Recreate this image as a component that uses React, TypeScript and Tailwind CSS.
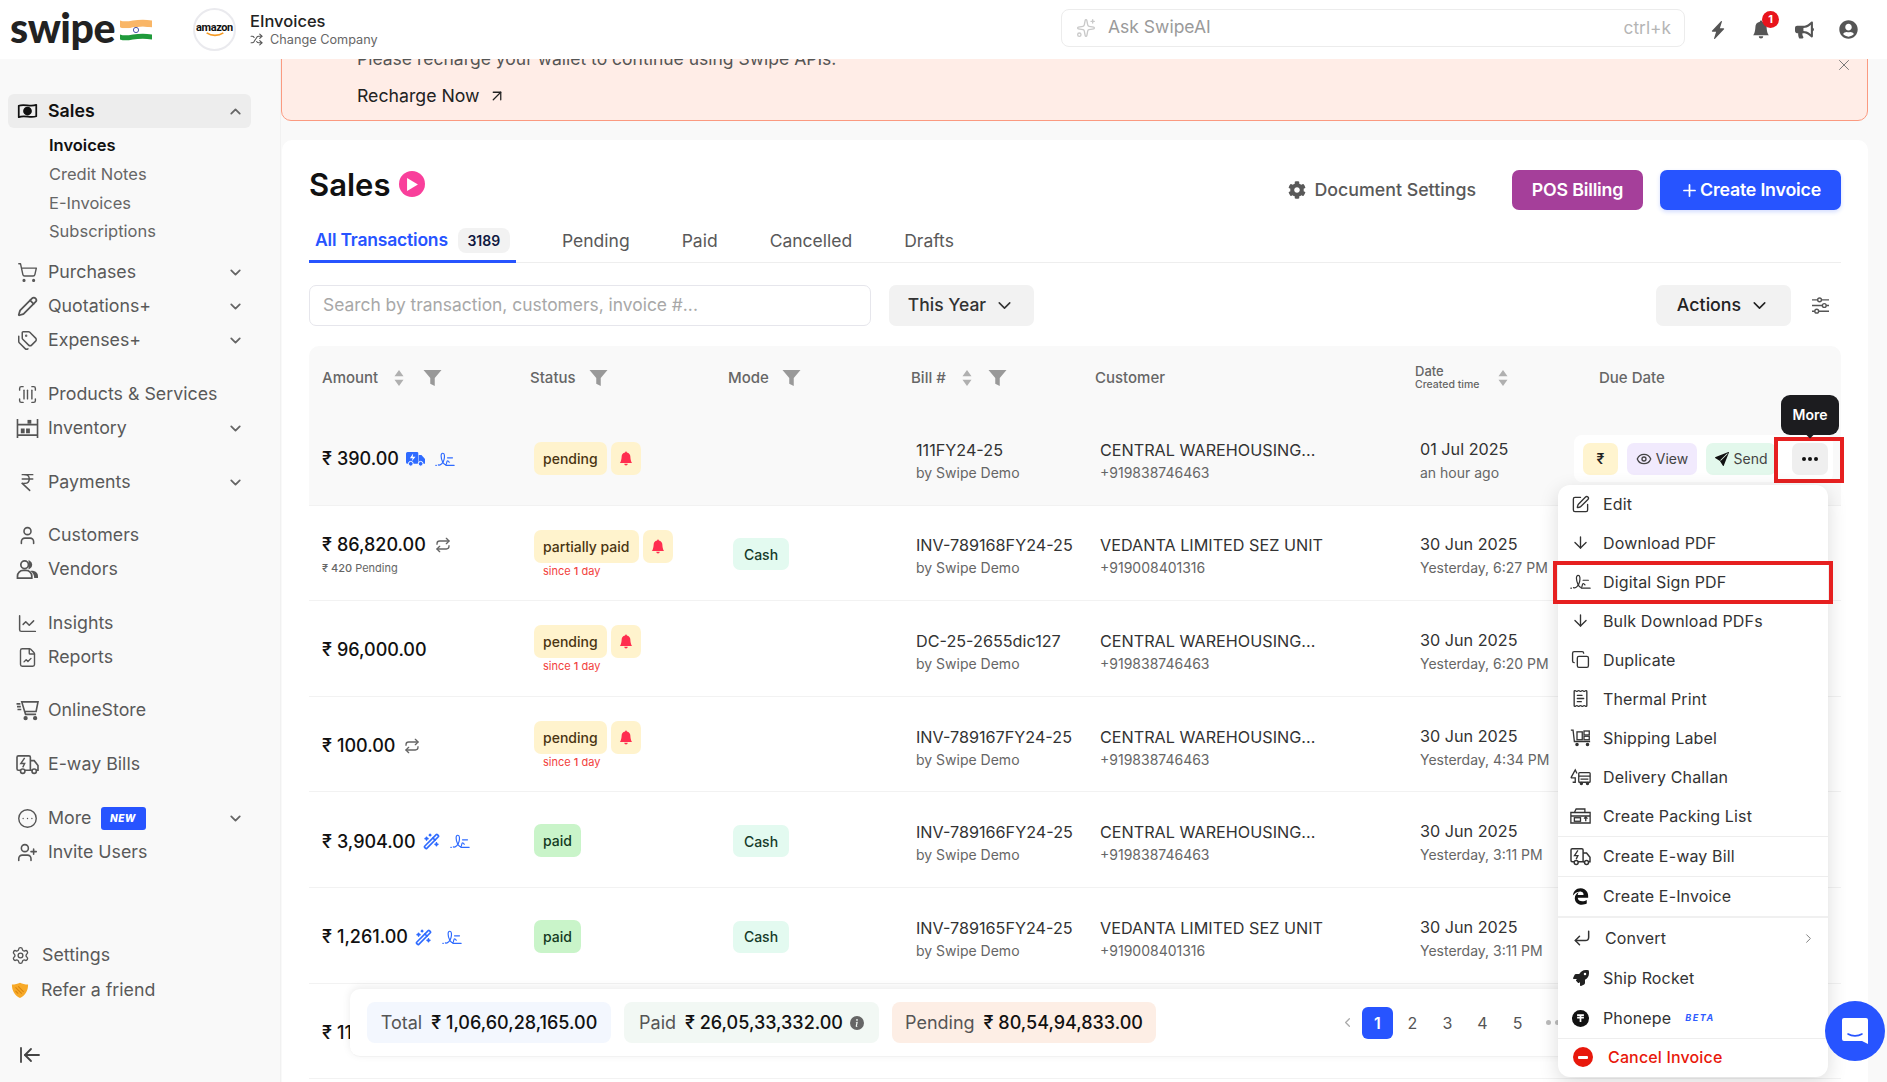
import {
  ArrowDown,
  ArrowLeftToLine,
  ArrowUpRight,
  ChartLine,
  ChevronDown,
  ChevronLeft,
  ChevronRight,
  ChevronUp,
  CircleEllipsis,
  Copy,
  CornerDownLeft,
  Eye,
  FileChartLine,
  IndianRupee,
  Pencil,
  Plus,
  ReceiptText,
  Repeat,
  ScanBarcode,
  Settings,
  Shuffle,
  Sparkles,
  SquarePen,
  Tags,
  User,
  UserPlus,
  WandSparkles,
  X,
  ShoppingCart,
} from "lucide-react";
import { BsLightningChargeFill, BsBellFill, BsInfoCircleFill, BsSendFill } from "react-icons/bs";
import { FaCog, FaUserCircle, FaRocket, FaEdgeLegacy, FaBullhorn } from "react-icons/fa";

const MoneyIcon = () => (
  <svg viewBox="0 0 24 20" className="w-[21px] h-[18px]" fill="none" stroke="#111" strokeWidth="2">
    <path d="M2 4c6-2.500 13 1.500 20-1v13c-6 2.500-13-1.500-20 1z" strokeLinejoin="round" />
    <circle cx="12" cy="10" r="4" fill="#111" />
  </svg>
);

const InventoryIcon = () => (
  <svg viewBox="0 0 24 22" className="w-[23px] h-[21px]" fill="none" stroke="#555" strokeWidth="1.7">
    <path d="M1.500 1v20M22.500 1v20M1.500 7h21M1.500 18h21" />
    <rect x="12" y="2" width="4" height="4" fill="#555" stroke="none" />
    <rect x="5" y="11" width="4" height="5" fill="#555" stroke="none" />
    <rect x="10.500" y="11" width="4" height="5" fill="#555" stroke="none" />
  </svg>
);

const VendorsIcon = () => (
  <svg viewBox="0 0 24 22" className="w-[23px] h-[21px]" fill="none" stroke="#555" strokeWidth="1.800">
    <circle cx="9" cy="6" r="4" />
    <path d="M1.500 20v-2a6 6 0 0 1 6-6h3a6 6 0 0 1 6 6v2z" />
    <path d="M14 2.500a4 4 0 0 1 0 7z" fill="#555" />
    <path d="M15 12.500c4-.5 8 1.500 8 5.500v2h-4c0-3-1-5.500-4-7.500z" fill="#555" stroke="none" />
  </svg>
);

const StoreCartIcon = () => (
  <svg viewBox="0 0 24 22" className="w-[23px] h-[21px]" fill="none" stroke="#555" strokeWidth="1.7">
    <path d="M6 2h17l-2 10H9L6 2zM9 12l1 3h11" />
    <path d="M0.500 4h4M1 7h4M1.500 10h4" />
    <circle cx="10" cy="19" r="1.400" fill="#555" />
    <circle cx="20" cy="19" r="1.400" fill="#555" />
  </svg>
);

const TruckBoltIcon = ({ className = "w-[23px] h-[21px]", color = "#555" }: { className?: string; color?: string }) => (
  <svg viewBox="0 0 24 22" className={className} fill="none" stroke={color} strokeWidth="1.7">
    <path d="M5 17H2.500A1.500 1.500 0 0 1 1 15.500V3.500A1.500 1.500 0 0 1 2.500 2H13.500A1.500 1.500 0 0 1 15 3.500V17H9" />
    <path d="M15 7h4l4 5v5h-2M15 17h2" />
    <circle cx="7" cy="18" r="2.300" />
    <circle cx="19" cy="18" r="2.300" />
    <path d="M9 4 5 10h4l-2 4" strokeWidth="1.500" />
  </svg>
);

const TruckSolid = () => (
  <svg viewBox="0 0 24 20" className="w-[19px] h-[16px]">
    <path d="M2 1h12a1.500 1.500 0 0 1 1.500 1.500V16H2a2 2 0 0 1-2-2V3a2 2 0 0 1 2-2z" fill="#2f6bff" />
    <path d="M16 5h3.500L24 10v6h-8z" fill="#2f6bff" />
    <circle cx="6" cy="16" r="3" fill="#2f6bff" stroke="#fff" strokeWidth="1.200" />
    <circle cx="18.500" cy="16" r="3" fill="#2f6bff" stroke="#fff" strokeWidth="1.200" />
    <path d="M9 3 5 9h3.500L7 13l5-6H8.500z" fill="#fff" />
  </svg>
);

// dot, looped scribble and the two lines on the right
const SignIcon = ({ className = "w-[20px] h-[17px]", color = "#2f6bff" }: { className?: string; color?: string }) => (
  <svg viewBox="0 0 24 20" className={className} fill="none" stroke={color} strokeWidth="1.400" strokeLinecap="round">
    <path d="M1 17h.6" />
    <path d="M4 16.500c3 1 6-2.500 7-7 .7-3.500.6-7-1.700-7-2.800 0-2.300 5.500-.3 10 1.400 3 3.500 4.500 4.500 3 .8-1.300.3-3.800 1.700-3.800 1 0 1 1.500 2 1.500" />
    <path d="M15 8h6M13 17h10" />
  </svg>
);

const ShippingIcon = () => (
  <svg viewBox="0 0 24 20" className="w-[21px] h-[18px]" fill="none" stroke="#333" strokeWidth="1.500">
    <path d="M1 1h2.500l1.500 13h18" />
    <rect x="8" y="3" width="6" height="9" />
    <rect x="16" y="2" width="6" height="4.500" />
    <rect x="16" y="8" width="6" height="4" />
    <circle cx="8" cy="17.500" r="1.300" fill="#333" />
    <circle cx="20" cy="17.500" r="1.300" fill="#333" />
  </svg>
);

const ChallanIcon = () => (
  <svg viewBox="0 0 24 20" className="w-[21px] h-[18px]" fill="none" stroke="#333" strokeWidth="1.500">
    <path d="M1 11l5-9 2 4M1 11h5v5H3" />
    <rect x="10" y="5" width="13" height="11" rx="1" />
    <path d="M10 9h13M12 12.500h9" />
    <circle cx="13" cy="17.500" r="1.200" fill="#333" />
    <circle cx="20" cy="17.500" r="1.200" fill="#333" />
  </svg>
);

const PackingIcon = () => (
  <svg viewBox="0 0 24 20" className="w-[21px] h-[18px]" fill="none" stroke="#333" strokeWidth="1.500">
    <path d="M1 6h22v12H1zM1 10h22M5 6l2-4h10v4" />
    <rect x="5" y="12" width="7" height="4" />
    <path d="M18 16v-5M16 13l2-2 2 2" />
  </svg>
);

const PhonepeIcon = () => (
  <svg viewBox="0 0 20 20" className="w-[17px] h-[17px]">
    <circle cx="10" cy="10" r="10" fill="#111" />
    <path d="M6 6h8M6 9h8M10 5v9" stroke="#fff" strokeWidth="2" fill="none" />
  </svg>
);

const FilterIcon = () => (
  <svg viewBox="0 0 20 20" className="w-[19px] h-[18px]" fill="#999">
    <path d="M0 1h20l-7.500 9v9l-5-2.500V10z" />
  </svg>
);

const SortIcon = () => (
  <svg viewBox="0 0 12 20" className="w-[12px] h-[18px]" fill="#b0b0b0">
    <path d="M6 1l5 7H1zM6 19l-5-7h10z" />
  </svg>
);

const NavItem = ({
  icon,
  label,
  caret,
  className = "",
  badge,
}: {
  icon: React.ReactNode;
  label: string;
  caret?: boolean;
  className?: string;
  badge?: boolean;
}) => (
  <div className={`flex items-center h-[34px] ml-[8px] w-[243px] ${className}`}>
    <span className="w-[40px] flex justify-center pl-[2px] shrink-0 pr-[4px]">{icon}</span>
    <span className="text-[#595959] text-[17.800px]">{label}</span>
    {badge && (
      <span className="ml-[9px] bg-[#2754ff] text-white rounded-[3px] text-[10px] font-extrabold italic w-[45px] h-[23px] flex items-center justify-center tracking-wider">
        NEW
      </span>
    )}
    {caret && <ChevronDown className="ml-auto mr-[7px] w-[17px] h-[17px] text-[#666]" strokeWidth={2.5} />}
  </div>
);

const Sidebar = () => {
  const ic = "w-[21px] h-[21px] text-[#555]";
  return (
    <aside className="w-[281px] shrink-0 flex flex-col border-r border-[#f1f1f1] pt-[35px] pb-[10px]">
      <div className="flex items-center h-[34px] ml-[8px] w-[243px] bg-[#ededed] rounded-[6px]">
        <span className="w-[40px] flex justify-center pr-[2px]">
          <MoneyIcon />
        </span>
        <span className="text-[#111] text-[17.800px] font-semibold">Sales</span>
        <ChevronUp className="ml-auto mr-[7px] w-[17px] h-[17px] text-[#666]" strokeWidth={2.5} />
      </div>
      <div className="mt-[3px] pl-[49px] text-[16.500px] text-[#666]">
        <div className="h-[29px] flex items-center text-[#111] font-semibold">Invoices</div>
        <div className="h-[29px] flex items-center">Credit Notes</div>
        <div className="h-[28px] flex items-center">E-Invoices</div>
        <div className="h-[28px] flex items-center">Subscriptions</div>
      </div>
      <NavItem className="mt-[10px]" caret label="Purchases" icon={<ShoppingCart className={ic} strokeWidth={1.6} />} />
      <NavItem caret label="Quotations+" icon={<Pencil className={ic} strokeWidth={2} />} />
      <NavItem caret label="Expenses+" icon={<Tags className={ic} strokeWidth={1.7} />} />
      <NavItem className="mt-[20px]" label="Products & Services" icon={<ScanBarcode className={ic} strokeWidth={1.6} />} />
      <NavItem caret label="Inventory" icon={<InventoryIcon />} />
      <NavItem className="mt-[20px]" caret label="Payments" icon={<IndianRupee className={ic} strokeWidth={1.7} />} />
      <NavItem className="mt-[19px]" label="Customers" icon={<User className={ic} strokeWidth={1.8} />} />
      <NavItem label="Vendors" icon={<VendorsIcon />} />
      <NavItem className="mt-[20px]" label="Insights" icon={<ChartLine className={ic} strokeWidth={1.7} />} />
      <NavItem label="Reports" icon={<FileChartLine className={ic} strokeWidth={1.6} />} />
      <NavItem className="mt-[19px]" label="OnlineStore" icon={<StoreCartIcon />} />
      <NavItem className="mt-[20px]" label="E-way Bills" icon={<TruckBoltIcon />} />
      <NavItem className="mt-[20px]" caret badge label="More" icon={<CircleEllipsis className={ic} strokeWidth={1.6} />} />
      <NavItem label="Invite Users" icon={<UserPlus className={ic} strokeWidth={1.8} />} />
      <div className="mt-auto pl-[11px]">
        <div className="flex items-center h-[34px] gap-[12px] text-[#595959] text-[17.800px]">
          <Settings className="w-[19px] h-[19px] text-[#555]" strokeWidth={1.7} />
          Settings
        </div>
        <div className="flex items-center h-[34px] gap-[12px] text-[#595959] text-[17.800px] mt-[1px]">
          <svg viewBox="0 0 20 20" className="w-[18px] h-[18px]">
            <path d="M1 4c4 0 6-1 9-2 3 1 5 2 9 2 0 7-3 12-9 15C4 16 1 11 1 4z" fill="#f7a928" />
            <path d="M5 7l7 7M8 6l6 6M5 11l3 3" stroke="#d9850f" strokeWidth="1.200" />
          </svg>
          Refer a friend
        </div>
        <div className="mt-[31px] pl-[7px] h-[34px] flex items-center">
          <ArrowLeftToLine className="w-[24px] h-[24px] text-[#444]" strokeWidth={1.8} />
        </div>
      </div>
    </aside>
  );
};

const Header = () => (
  <header className="relative z-20 h-[59px] shrink-0 bg-white flex items-center pl-[10px] pr-[29px]">
    <span className="[font-family:Lato,sans-serif] font-black text-[41px] leading-none text-[#222] tracking-[-0.5px] -mt-[4px] w-[105px]">
      swipe
    </span>
    <svg viewBox="0 0 32 24" className="w-[32px] h-[25px] ml-[5px]">
      <path d="M0 3c8 3 16-3 32 0v7c-16-3-24 3-32 0z" fill="#f9b667" />
      <path d="M0 10c8 3 16-3 32 0v7c-16-3-24 3-32 0z" fill="#fff" />
      <path d="M0 17c8 3 16-3 32 0v5c-16-3-24 3-32 0z" fill="#1f9a3b" />
      <circle cx="16" cy="12.500" r="2.600" fill="none" stroke="#4a55a8" strokeWidth="1" />
    </svg>
    <div className="ml-[41px] w-[43px] h-[43px] rounded-full border-2 border-[#eaeaee] flex flex-col items-center justify-center">
      <span className="[font-family:Roboto,sans-serif] font-bold text-[11px] leading-none text-[#111] tracking-[-0.4px]">amazon</span>
      <svg viewBox="0 0 24 6" className="w-[20px] h-[5px] -mt-[1px]">
        <path d="M2 1c6 4 14 4 20 0" fill="none" stroke="#f59a23" strokeWidth="2" />
      </svg>
    </div>
    <div className="ml-[14px]">
      <div className="text-[16.500px] leading-[20px] text-[#222] font-medium">EInvoices</div>
      <div className="flex items-center text-[12.700px] leading-[17px] text-[#666]">
        <Shuffle className="w-[13px] h-[13px] mr-[7px] text-[#555]" />
        Change Company
      </div>
    </div>
    <div className="ml-auto w-[624px] h-[38px] -mt-[4px] rounded-[8px] border border-[#ececec] flex items-center pl-[14px] pr-[13px] mr-[24px]">
      <Sparkles className="w-[20px] h-[20px] text-[#c9c9c9]" strokeWidth={1.6} />
      <span className="ml-[12px] text-[17.500px] text-[#9a9a9a]">Ask SwipeAI</span>
      <span className="ml-auto text-[17.300px] text-[#b5b5b5]">ctrl+k</span>
    </div>
    <div className="flex items-center gap-[25px] text-[#555]">
      <BsLightningChargeFill className="w-[18px] h-[20px]" />
      <span className="relative">
        <BsBellFill className="w-[18px] h-[19px]" />
        <span className="absolute -top-[9px] left-[10px] w-[17px] h-[17px] rounded-full bg-[#e8141c] text-white text-[11px] font-bold flex items-center justify-center">
          1
        </span>
      </span>
      <FaBullhorn className="w-[19px] h-[18px]" />
      <FaUserCircle className="w-[19px] h-[19px]" />
    </div>
  </header>
);

const Rupee = () => <span className="mr-[5px]">₹</span>;

type Row = {
  amount: string;
  sub?: string;
  icons?: "eway" | "repeat" | "wand";
  status: string;
  bell?: boolean;
  since?: boolean;
  cash?: boolean;
  bill: string;
  customer: string;
  phone: string;
  date: string;
  created: string;
};

const CENTRAL = { customer: "CENTRAL WAREHOUSING...", phone: "+919838746463" };
const VEDANTA = { customer: "VEDANTA LIMITED SEZ UNIT", phone: "+919008401316" };

const rows: Row[] = [
  { amount: "390.00", icons: "eway", status: "pending", bell: true, bill: "111FY24-25", ...CENTRAL, date: "01 Jul 2025", created: "an hour ago" },
  { amount: "86,820.00", sub: "420", icons: "repeat", status: "partially paid", bell: true, since: true, cash: true, bill: "INV-789168FY24-25", ...VEDANTA, date: "30 Jun 2025", created: "Yesterday, 6:27 PM" },
  { amount: "96,000.00", status: "pending", bell: true, since: true, bill: "DC-25-2655dic127", ...CENTRAL, date: "30 Jun 2025", created: "Yesterday, 6:20 PM" },
  { amount: "100.00", icons: "repeat", status: "pending", bell: true, since: true, bill: "INV-789167FY24-25", ...CENTRAL, date: "30 Jun 2025", created: "Yesterday, 4:34 PM" },
  { amount: "3,904.00", icons: "wand", status: "paid", cash: true, bill: "INV-789166FY24-25", ...CENTRAL, date: "30 Jun 2025", created: "Yesterday, 3:11 PM" },
  { amount: "1,261.00", icons: "wand", status: "paid", cash: true, bill: "INV-789165FY24-25", ...VEDANTA, date: "30 Jun 2025", created: "Yesterday, 3:11 PM" },
];

const GRID = "grid grid-cols-[217px_198px_183px_184px_320px_184px_245px]";

const TableRow = ({ row, hover }: { row: Row; hover?: boolean }) => {
  const paid = row.status === "paid";
  return (
    <div className={`relative ${GRID} items-center h-[95.600px] border-b border-[#f2f2f2] ${hover ? "bg-[#f9f9f9]" : ""}`}>
      <div className="pl-[13px] pt-[4px]">
        <div className="flex items-center text-[18px] leading-[24px] font-medium text-[#111]">
          <Rupee />
          {row.amount}
          {row.icons === "eway" && (
            <span className="flex items-center gap-[10px] ml-[7px]">
              <TruckSolid />
              <SignIcon />
            </span>
          )}
          {row.icons === "repeat" && <Repeat className="w-[16px] h-[16px] ml-[9px] text-[#666]" strokeWidth={2} />}
          {row.icons === "wand" && (
            <span className="flex items-center gap-[10px] ml-[7px]">
              <WandSparkles className="w-[17px] h-[17px] text-[#2f6bff]" strokeWidth={2.3} />
              <SignIcon />
            </span>
          )}
        </div>
        {row.sub && (
          <div className="text-[11px] leading-[16px] mt-[3px] text-[#666]">
            <span className="font-medium">₹ {row.sub}</span> Pending
          </div>
        )}
      </div>
      <div className="pl-[8px] pt-[2px]">
        <div className="flex gap-[4px]">
          <span className={`h-[33px] px-[9px] rounded-[7px] flex items-center text-[14px] font-medium ${paid ? "bg-[#c9f4c9] text-[#143a1f]" : "bg-[#fff3cd] text-[#4a3512]"}`}>
            {row.status}
          </span>
          {row.bell && (
            <span className="h-[33px] w-[30px] rounded-[7px] bg-[#fff3cd] flex items-center justify-center text-[#ff2d4f]">
              <BsBellFill className="w-[14px] h-[15px]" />
            </span>
          )}
        </div>
        {row.since && <div className="pl-[9px] text-[11px] leading-[14px] mt-[1px] text-[#f2413d]">since <b className="font-medium">1</b> day</div>}
      </div>
      <div className="pl-[9px] pt-[3px]">
        {row.cash && <span className="inline-flex h-[32px] w-[56px] rounded-[7px] bg-[#e3faf0] items-center justify-center text-[14px] font-medium text-[#163a2a]">Cash</span>}
      </div>
      <div className="pl-[9px] pt-[6px]">
        <div className="text-[16.200px] leading-[24px] text-[#333]">{row.bill}</div>
        <div className="text-[14px] leading-[21px] text-[#666]">by Swipe Demo</div>
      </div>
      <div className="pl-[9px] pt-[6px]">
        <div className="text-[16.200px] leading-[24px] text-[#333]">{row.customer}</div>
        <div className="text-[14px] leading-[21px] text-[#666]">{row.phone}</div>
      </div>
      <div className="pl-[9px] pt-[6px] whitespace-nowrap">
        <div className="text-[16.200px] leading-[24px] text-[#333]">{row.date}</div>
        <div className="text-[14px] leading-[23px] text-[#666]">{row.created}</div>
      </div>
      <div />
      {hover && (
        <div className="absolute right-[8px] top-[25px] h-[47px] w-[259px] rounded-[8px] bg-white flex items-center pl-[9px] text-[14px] text-[#444]">
          <span className="w-[35px] h-[32px] rounded-[7px] bg-[#fff4cf] flex items-center justify-center text-[#222] font-semibold">₹</span>
          <span className="ml-[9px] w-[70px] h-[32px] rounded-[7px] bg-[#f1eafd] flex items-center justify-center gap-[4px]">
            <Eye className="w-[16px] h-[16px]" />
            View
          </span>
          <span className="ml-[9px] w-[70px] h-[32px] rounded-[7px] bg-[#e3f8ec] flex items-center justify-center gap-[5px]">
            <BsSendFill className="w-[14px] h-[14px] text-[#111]" />
            Send
          </span>
          <span className="relative ml-[16px] w-[36px] h-[32px] rounded-[7px] bg-[#efefef] flex items-center justify-center text-[#111] font-bold gap-[2px]">
            <i className="w-[4px] h-[4px] rounded-full bg-[#111]" />
            <i className="w-[4px] h-[4px] rounded-full bg-[#111]" />
            <i className="w-[4px] h-[4px] rounded-full bg-[#111]" />
            <span className="absolute -left-[18px] -top-[6px] w-[70px] h-[46px] border-[4px] border-[#e62020]" />
            <span className="absolute -left-[11px] -top-[48px] w-[58px] h-[40px] rounded-[9px] bg-[#1c1c1f] text-white text-[14px] font-semibold flex items-center justify-center">
              More
            </span>
            <span className="absolute left-[13px] -top-[9px] w-[10px] h-[5px] bg-[#1c1c1f] [clip-path:polygon(0_0,100%_0,50%_100%)]" />
          </span>
        </div>
      )}
    </div>
  );
};

const MenuItem = ({ icon, label, className = "", boxed }: { icon: React.ReactNode; label: string; className?: string; boxed?: boolean }) => (
  <div className={`relative h-[39.100px] flex items-center text-[16px] text-[#333] tracking-[0.15px] ${className}`}>
    <span className="w-[45px] flex justify-center shrink-0">{icon}</span>
    {label}
    {boxed && <span className="absolute -left-[5px] -right-[5px] top-[-1px] bottom-[-3px] border-[4px] border-[#e62020]" />}
  </div>
);

const ActionMenu = () => {
  const ic = "w-[19px] h-[19px] text-[#333]";
  return (
    <div className="absolute z-10 left-[1249px] top-[139px] w-[270px] h-[592px] bg-white rounded-[12px] shadow-[0_6px_20px_rgba(0,0,0,0.14)]">
      <MenuItem className="!h-[38px]" label="Edit" icon={<SquarePen className={ic} strokeWidth={1.7} />} />
      <MenuItem label="Download PDF" icon={<ArrowDown className={ic} strokeWidth={1.7} />} />
      <MenuItem boxed label="Digital Sign PDF" icon={<SignIcon className="w-[21px] h-[18px]" color="#333" />} />
      <MenuItem label="Bulk Download PDFs" icon={<ArrowDown className={ic} strokeWidth={1.7} />} />
      <MenuItem label="Duplicate" icon={<Copy className={ic} strokeWidth={1.7} />} />
      <MenuItem label="Thermal Print" icon={<ReceiptText className={ic} strokeWidth={1.7} />} />
      <MenuItem label="Shipping Label" icon={<ShippingIcon />} />
      <MenuItem label="Delivery Challan" icon={<ChallanIcon />} />
      <MenuItem label="Create Packing List" icon={<PackingIcon />} />
      <div className="border-t border-[#eee]" />
      <MenuItem label="Create E-way Bill" icon={<TruckBoltIcon className="w-[21px] h-[19px]" color="#333" />} />
      <div className="border-t border-[#eee]" />
      <MenuItem label="Create E-Invoice" icon={<FaEdgeLegacy className="w-[17px] h-[17px] text-[#111]" />} />
      <div className="border-t-2 border-[#f0f0f0]" />
      <div className="h-[41px] flex items-center text-[16px] text-[#333] tracking-[0.15px]">
        <span className="w-[47px] flex justify-center shrink-0">
          <CornerDownLeft className="w-[20px] h-[20px] text-[#333]" strokeWidth={1.8} />
        </span>
        Convert
        <ChevronRight className="ml-auto mr-[12px] w-[15px] h-[15px] text-[#777]" strokeWidth={1.5} />
      </div>
      <MenuItem label="Ship Rocket" icon={<FaRocket className="w-[16px] h-[16px] text-[#222]" />} />
      <div className="relative h-[40px] flex items-center text-[16px] text-[#333] tracking-[0.15px]">
        <span className="w-[45px] flex justify-center shrink-0">
          <PhonepeIcon />
        </span>
        Phonepe
        <span className="ml-[14px] text-[9px] font-bold italic text-[#2f5cff] tracking-[1.5px]">BETA</span>
      </div>
      <div className="border-t border-[#eee]" />
      <div className="h-[36px] flex items-center text-[16px] font-medium text-[#e8180c] tracking-[0.15px]">
        <span className="w-[50px] flex justify-center shrink-0">
          <span className="w-[20px] h-[20px] rounded-full bg-[#e8180c] flex items-center justify-center">
            <i className="w-[10px] h-[3px] bg-white rounded-[1px]" />
          </span>
        </span>
        Cancel Invoice
      </div>
    </div>
  );
};

const SummaryBar = () => (
  <div className="absolute left-[41px] top-[643px] w-[1230px] h-[68px] bg-white rounded-[10px] shadow-[0_-2px_8px_rgba(0,0,0,0.08)] border-b border-[#f2f2f2] flex items-center pl-[17px]">
    <span className="h-[41px] w-[244px] rounded-[8px] bg-[#f3f7fe] flex items-center justify-center text-[18px] text-[#111] font-medium">
      <span className="font-normal text-[#555] mr-[9px]">Total</span>₹ 1,06,60,28,165.00
    </span>
    <span className="ml-[13px] h-[41px] w-[255px] rounded-[8px] bg-[#f2f8f4] flex items-center justify-center text-[18px] text-[#111] font-medium">
      <span className="font-normal text-[#555] mr-[9px]">Paid</span>₹ 26,05,33,332.00
      <BsInfoCircleFill className="ml-[7px] w-[14px] h-[14px] text-[#666]" />
    </span>
    <span className="ml-[13px] h-[41px] w-[264px] rounded-[8px] bg-[#fdeee5] flex items-center justify-center text-[18px] text-[#111] font-medium">
      <span className="font-normal text-[#555] mr-[9px]">Pending</span>₹ 80,54,94,833.00
    </span>
    <ChevronLeft className="ml-[184px] w-[15px] h-[15px] text-[#aaa]" />
    <span className="ml-[7px] w-[31px] h-[32px] rounded-[6px] bg-[#2754ff] text-white flex items-center justify-center text-[16px] font-semibold">1</span>
    <span className="w-[35px] ml-[2px] text-center text-[16px] text-[#555]">2</span>
    <span className="w-[35px] text-center text-[16px] text-[#555]">3</span>
    <span className="w-[35px] text-center text-[16px] text-[#555]">4</span>
    <span className="w-[35px] text-center text-[16px] text-[#555]">5</span>
    <span className="ml-[11px] flex gap-[4px]">
      <i className="w-[5px] h-[5px] rounded-full bg-[#bbb]" />
      <i className="w-[5px] h-[5px] rounded-full bg-[#bbb]" />
      <i className="w-[5px] h-[5px] rounded-full bg-[#bbb]" />
    </span>
  </div>
);

const TableHeader = () => (
  <div className={`${GRID} items-center h-[64px] bg-[#f9f9f9] rounded-t-[10px] text-[15px] font-medium text-[#666]`}>
    <div className="pl-[13px] flex items-center">
      Amount
      <span className="ml-[15px]">
        <SortIcon />
      </span>
      <span className="ml-[18px]">
        <FilterIcon />
      </span>
    </div>
    <div className="pl-[4px] flex items-center gap-[13px]">
      Status
      <FilterIcon />
    </div>
    <div className="pl-[4px] flex items-center gap-[13px]">
      Mode
      <FilterIcon />
    </div>
    <div className="pl-[4px] flex items-center">
      Bill #
      <span className="ml-[15px]">
        <SortIcon />
      </span>
      <span className="ml-[15px]">
        <FilterIcon />
      </span>
    </div>
    <div className="pl-[4px]">Customer</div>
    <div className="pl-[4px] flex items-center">
      <div>
        <div className="text-[13px] leading-[14px]">Date</div>
        <div className="text-[10.500px] leading-[14px]">Created time</div>
      </div>
      <span className="ml-[18px]">
        <SortIcon />
      </span>
    </div>
    <div className="pl-[4px]">Due Date</div>
  </div>
);

const Tabs = () => (
  <div className="mt-[5px] h-[48px] flex items-stretch border-b border-[#eee] text-[17.500px] text-[#595959]">
    <div className="w-[207px] border-b-[3px] border-[#2754ff] -mb-[1px] flex items-center pl-[6px] pt-[6px]">
      <span className="text-[#2754ff] font-semibold tracking-[-0.2px]">All Transactions</span>
      <span className="ml-[10px] w-[52px] h-[25px] rounded-[8px] bg-[#f2f2f2] flex items-center justify-center text-[14px] font-semibold text-[#101840]">3189</span>
    </div>
    <span className="ml-[46px] pt-[6px] flex items-center">Pending</span>
    <span className="ml-[52px] pt-[6px] flex items-center">Paid</span>
    <span className="ml-[52px] pt-[6px] flex items-center">Cancelled</span>
    <span className="ml-[52px] pt-[6px] flex items-center">Drafts</span>
  </div>
);

export default function App() {
  return (
    <div className="relative w-[1887px] h-[1082px] overflow-hidden flex flex-col bg-[#f9f9f9] [font-family:Inter,sans-serif]">
      <Header />
      <div className="flex flex-1 min-h-0">
        <Sidebar />
        <main className="flex-1 min-w-0 pr-[19px]">
          <div className="relative -mt-[16px] h-[78px] bg-[#ffede7] border border-[#fb9a80] rounded-b-[10px] pl-[75px] pt-[3px]">
            <div className="text-[17.500px] leading-[24px] text-[#555]">Please recharge your wallet to continue using Swipe APIs.</div>
            <div className="mt-[13px] flex items-center text-[17.700px] leading-[24px] text-[#222]">
              Recharge Now
              <ArrowUpRight className="ml-[8px] w-[18px] h-[18px]" strokeWidth={1.7} />
            </div>
            <X className="absolute right-[14px] top-[12px] w-[18px] h-[18px] text-[#777]" strokeWidth={1.3} />
          </div>
          <section className="mt-[19px] h-[942px] bg-white rounded-t-[10px] ml-[1px] px-[27px] pt-[30px]">
            <div className="flex items-center h-[40px]">
              <div className="flex items-center -mt-[12px]">
                <h1 className="text-[31px] font-semibold text-[#111] leading-none">Sales</h1>
                <span className="ml-[9px] w-[26px] h-[26px] rounded-full bg-[#f93f9b] flex items-center justify-center">
                  <svg viewBox="0 0 10 12" className="w-[11px] h-[13px] ml-[1px]">
                    <path d="M0 0l10 6-10 6z" fill="#fff" />
                  </svg>
                </span>
              </div>
              <span className="ml-auto flex items-center text-[17.800px] font-medium text-[#595959]">
                <FaCog className="w-[18px] h-[18px] mr-[8px]" />
                Document Settings
              </span>
              <button className="ml-[36px] w-[131px] h-[40px] rounded-[7px] bg-[#a53f9a] text-white text-[17.800px] font-semibold tracking-[-0.2px]">POS Billing</button>
              <button className="ml-[17px] w-[181px] h-[40px] rounded-[7px] bg-[#2754ff] text-white text-[17.800px] font-semibold tracking-[-0.2px] flex items-center justify-center shadow-[0_2px_4px_rgba(39,84,255,0.2)]">
                <Plus className="w-[19px] h-[19px] mr-[1px]" strokeWidth={2.2} />
                Create Invoice
              </button>
            </div>
            <Tabs />
            <div className="mt-[22px] flex items-center h-[41px]">
              <div className="w-[562px] h-[41px] rounded-[7px] border border-[#e6e6ec] flex items-center pl-[13px] text-[17.400px] text-[#a8a8a8]">
                Search by transaction, customers, invoice #...
              </div>
              <div className="ml-[18px] w-[145px] h-[41px] rounded-[7px] bg-[#f2f2f2] flex items-center justify-center text-[17.500px] font-medium text-[#333]">
                This Year
                <ChevronDown className="ml-[8px] w-[21px] h-[21px]" strokeWidth={1.8} />
              </div>
              <div className="ml-auto w-[135px] h-[41px] rounded-[7px] bg-[#f2f2f2] flex items-center justify-center text-[17.800px] font-medium text-[#222]">
                Actions
                <ChevronDown className="ml-[8px] w-[21px] h-[21px]" strokeWidth={1.8} />
              </div>
              <svg viewBox="0 0 20 18" className="ml-[20px] mr-[11px] w-[19px] h-[17px]" fill="none" stroke="#555" strokeWidth="1.500">
                <path d="M1 3h6M11 3h8M1 9h11M16 9h3M1 15h3M8 15h11" />
                <circle cx="9" cy="3" r="2" />
                <circle cx="14" cy="9" r="2" />
                <circle cx="6" cy="15" r="2" />
              </svg>
            </div>
            <div className="relative mt-[20px]">
              <TableHeader />
              {rows.map((row, i) => (
                <TableRow key={row.bill} row={row} hover={i === 0} />
              ))}
              <div className="h-[95.600px] border-b border-[#f2f2f2] flex items-center pl-[13px] pt-[4px] text-[18px] font-medium text-[#111]">
                <Rupee />
                11
              </div>
              <SummaryBar />
              <ActionMenu />
            </div>
          </section>
        </main>
      </div>
      <div className="absolute right-[2px] top-[1001px] z-20 w-[60px] h-[60px] rounded-full bg-[#2754ff] flex items-center justify-center">
        <svg viewBox="0 0 28 28" className="w-[28px] h-[28px]">
          <path d="M3 1h22a2 2 0 0 1 2 2v24l-6-3H3a2 2 0 0 1-2-2V3a2 2 0 0 1 2-2z" fill="#fff" />
          <path d="M7 17c4 2.500 10 2.500 14 0" fill="none" stroke="#2754ff" strokeWidth="1.600" strokeLinecap="round" />
        </svg>
      </div>
    </div>
  );
}
